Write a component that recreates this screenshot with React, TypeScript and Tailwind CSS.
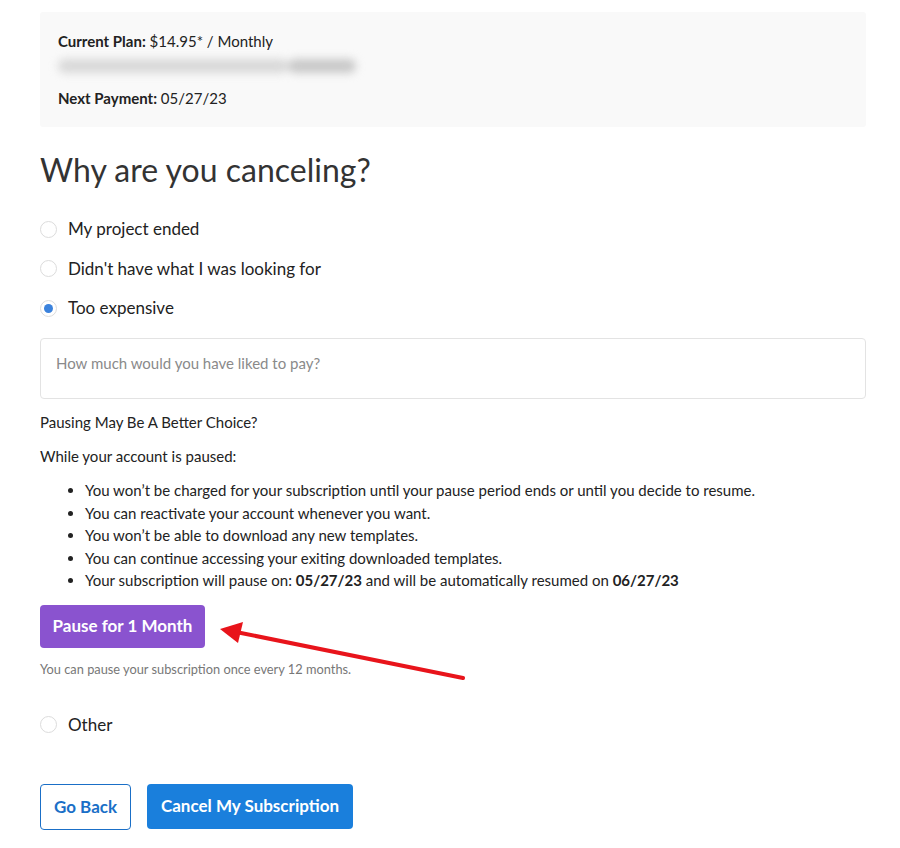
const reasons = [
  { label: "My project ended", checked: false },
  { label: "Didn't have what I was looking for", checked: false },
  { label: "Too expensive", checked: true },
];

function Radio({ checked, label }: { checked?: boolean; label: string }) {
  return (
    <label className="flex h-[26px] items-center gap-[11px] text-[17px] text-[#222]">
      <span className="flex h-[17px] w-[17px] items-center justify-center rounded-full border border-[#dcdcdc] bg-white">
        {checked && <span className="h-[9px] w-[9px] rounded-full bg-[#3b82dc]" />}
      </span>
      {label}
    </label>
  );
}

export default function App() {
  return (
    <main
      className="relative min-h-[848px] w-[900px] bg-white pb-10 pl-10 pr-[34px] pt-3 text-[#222]"
      style={{ fontFamily: "Lato, 'Noto Sans', sans-serif" }}
    >
      <section className="rounded-[3px] bg-[#f9f9f9] px-[18px] pb-[18px] pt-[18px] text-[15px]">
        <p className="leading-[22px]">
          <b>Current Plan:</b> $14.95* / Monthly
        </p>
        <div className="mt-[7px] flex h-[14px] w-[298px] blur-[4px]">
          <div className="h-full w-[230px] rounded-full bg-[#d8d8d8]" />
          <div className="h-full w-[68px] rounded-full bg-[#c8c8c8]" />
        </div>
        <p className="mt-[14px] leading-[22px]">
          <b>Next Payment:</b> 05/27/23
        </p>
      </section>

      <h1 className="mt-[23px] text-[32px] leading-[40px] text-[#333]">Why are you canceling?</h1>

      <div className="mt-[26px] flex flex-col gap-[13.5px]">
        {reasons.map((r) => (
          <Radio key={r.label} label={r.label} checked={r.checked} />
        ))}
      </div>

      <textarea
        className="mt-[17px] block h-[61px] w-full resize-none rounded-[4px] border border-[#e3e3e3] px-[15px] py-[13px] text-[15px] outline-none placeholder:text-[#8a8a8a]"
        placeholder="How much would you have liked to pay?"
      />

      <p className="mt-[12px] text-[15px] leading-[22px]">Pausing May Be A Better Choice?</p>
      <p className="mt-[12px] text-[15px] leading-[22px]">While your account is paused:</p>

      <ul className="mt-[12px] list-disc pl-[45px] text-[15px] leading-[22.5px]">
        <li>You won’t be charged for your subscription until your pause period ends or until you decide to resume.</li>
        <li>You can reactivate your account whenever you want.</li>
        <li>You won’t be able to download any new templates.</li>
        <li>You can continue accessing your exiting downloaded templates.</li>
        <li>
          Your subscription will pause on: <b>05/27/23</b> and will be automatically resumed on <b>06/27/23</b>
        </li>
      </ul>

      <button className="mt-[13px] h-[43px] w-[165px] rounded-[4px] bg-[#8a53cf] text-[17px] font-bold text-white">
        Pause for 1 Month
      </button>
      <p className="mt-[12px] text-[12.8px] leading-[18px] text-[#777]">
        You can pause your subscription once every 12 months.
      </p>

      <div className="mt-[34px]">
        <Radio label="Other" />
      </div>

      <div className="mt-[46px] flex gap-4">
        <button className="h-[46px] w-[91px] rounded-[4px] border border-[#1a6fc7] bg-white text-[17px] font-bold text-[#1a6fc7]">
          Go Back
        </button>
        <button className="h-[45px] w-[206px] rounded-[4px] bg-[#1a7fdc] text-[17px] font-bold text-white">
          Cancel My Subscription
        </button>
      </div>

      <svg className="pointer-events-none absolute left-0 top-0" width="900" height="848">
        <line x1="463" y1="678" x2="236" y2="632" stroke="#e8141b" strokeWidth="4" strokeLinecap="round" />
        <polygon points="220,629 243,622 238,643" fill="#e8141b" />
      </svg>
    </main>
  );
}
